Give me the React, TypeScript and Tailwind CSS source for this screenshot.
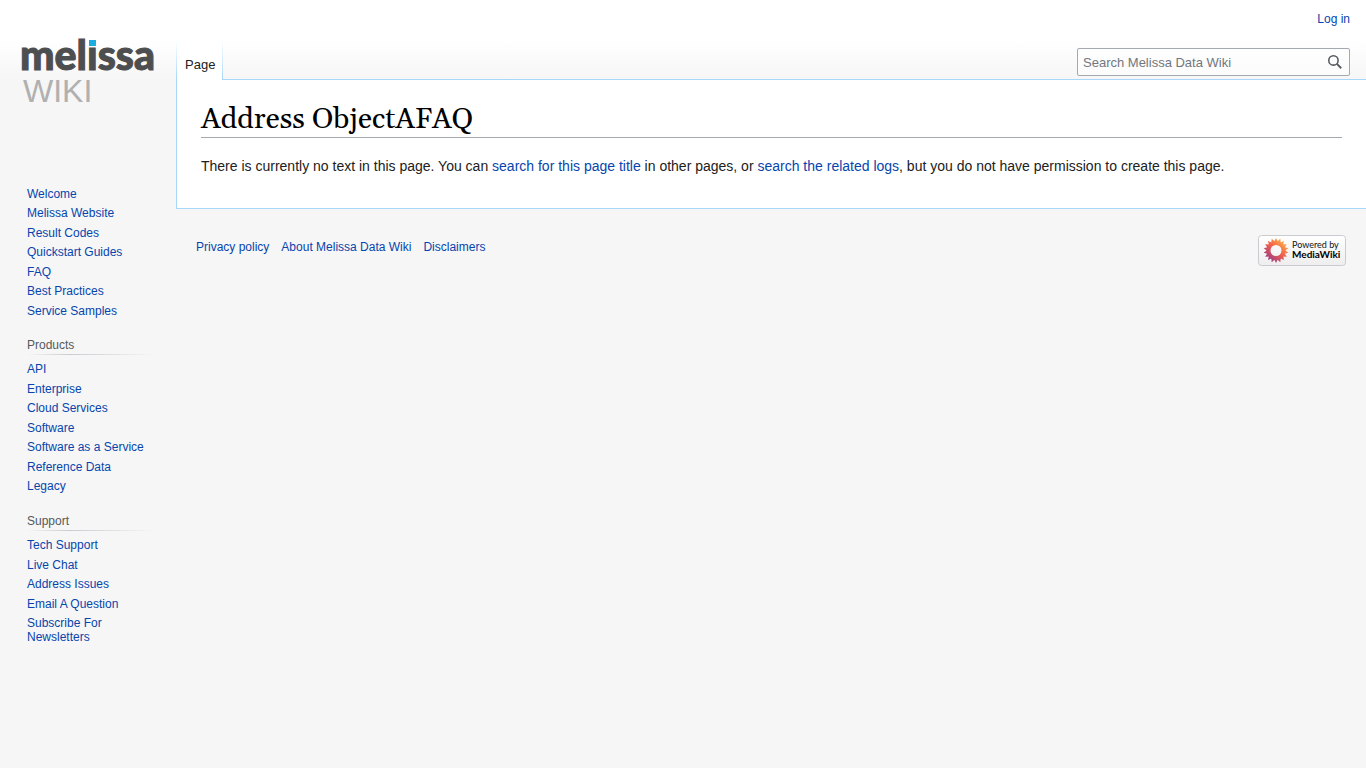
import clsx from "clsx";

const mainLinks = [
  "Welcome",
  "Melissa Website",
  "Result Codes",
  "Quickstart Guides",
  "FAQ",
  "Best Practices",
  "Service Samples",
];

const portals = [
  {
    title: "Products",
    links: [
      "API",
      "Enterprise",
      "Cloud Services",
      "Software",
      "Software as a Service",
      "Reference Data",
      "Legacy",
    ],
  },
  {
    title: "Support",
    links: [
      "Tech Support",
      "Live Chat",
      "Address Issues",
      "Email A Question",
      "Subscribe For Newsletters",
    ],
  },
];

const footerLinks = ["Privacy policy", "About Melissa Data Wiki", "Disclaimers"];

const petals = Array.from({ length: 18 }, (_, i) => i * 20);

function WikiLink({ children }: { children: string }) {
  return (
    <a href="#" className="text-[#0645ad] hover:underline">
      {children}
    </a>
  );
}

function Logo() {
  return (
    <a href="#" aria-label="Melissa Wiki" className="block pl-5 pt-6">
      <svg width="144" height="88" viewBox="0 0 144 88">
        {/* dotless i, the blue square is its dot */}
        <text
          x="0"
          y="46"
          fontFamily="Lato, sans-serif"
          fontWeight="900"
          fontSize="41"
          fill="#4d4e50"
          stroke="#4d4e50"
          strokeWidth="1"
        >
          melıssa
        </text>
        <rect x="69" y="16" width="7" height="6" fill="#1cade0" />
        <text
          x="3"
          y="78"
          fontFamily="Liberation Sans, sans-serif"
          fontSize="32"
          fill="#b0b0b0"
        >
          WIKI
        </text>
      </svg>
    </a>
  );
}

function LinkList({ links, className }: { links: string[]; className: string }) {
  return (
    <ul className={clsx("text-xs leading-[14px]", className)}>
      {links.map((link) => (
        <li key={link}>
          <WikiLink>{link}</WikiLink>
        </li>
      ))}
    </ul>
  );
}

function Sidebar() {
  return (
    <aside className="w-44 shrink-0">
      <div className="h-[187px]">
        <Logo />
      </div>
      <nav className="pl-[27px] pr-5">
        <LinkList
          links={mainLinks}
          className="[&>li:nth-child(odd)]:pb-[5px] [&>li:nth-child(even)]:pb-[6px]"
        />
        {portals.map((portal) => (
          <section key={portal.title} className="pt-[15px]">
            <h3 className="h-4 text-xs leading-[14px] text-[#54595d]">
              {portal.title}
            </h3>
            <div className="mb-[7px] h-px bg-linear-to-r from-transparent via-[#c8ccd1] via-33% to-transparent" />
            <LinkList
              links={portal.links}
              className="[&>li:nth-child(odd)]:pb-[6px] [&>li:nth-child(even)]:pb-[5px]"
            />
          </section>
        ))}
      </nav>
    </aside>
  );
}

function Header() {
  return (
    <header>
      <div className="flex h-10 justify-end pr-4 pt-3 text-xs leading-[14px]">
        <WikiLink>Log in</WikiLink>
      </div>
      <div className="flex h-10 items-stretch">
        <div className="w-px bg-linear-to-b from-white to-[#a7d7f9]" />
        <a
          href="#"
          className="bg-white pl-2 pr-[7px] pt-[17px] text-[13px] leading-4 text-[#202122]"
        >
          Page
        </a>
        <div className="w-px bg-linear-to-b from-white to-[#a7d7f9]" />
        <div className="flex flex-1 justify-end border-b border-[#a7d7f9] pr-4 pt-2">
          <form
            role="search"
            className="flex h-7 w-[273px] items-center rounded-xs border border-[#a2a9b1] bg-white/50"
          >
            <input
              type="search"
              aria-label="Search Melissa Data Wiki"
              placeholder="Search Melissa Data Wiki"
              className="h-full min-w-0 flex-1 bg-transparent pl-[5px] pt-px text-[13px] text-black outline-none placeholder:text-[#72777d]"
            />
            <button type="submit" aria-label="Go" className="px-[7px]">
              <svg width="14" height="14" viewBox="0 0 18 18">
                <path
                  d="M11.5 11.5 L17 17"
                  stroke="#54595d"
                  strokeWidth="2.4"
                />
                <circle
                  cx="7"
                  cy="7"
                  r="6"
                  fill="none"
                  stroke="#54595d"
                  strokeWidth="2"
                />
              </svg>
            </button>
          </form>
        </div>
      </div>
    </header>
  );
}

function PoweredBy() {
  return (
    <a href="#" aria-label="Powered by MediaWiki">
      <svg width="88" height="31" viewBox="0 0 88 31">
        <defs>
          <linearGradient id="badge" x1="0" y1="0" x2="0" y2="1">
            <stop offset="0" stopColor="#ffffff" />
            <stop offset="1" stopColor="#eeeeee" />
          </linearGradient>
          <linearGradient
            id="flower"
            gradientUnits="userSpaceOnUse"
            x1="26"
            y1="6"
            x2="10"
            y2="25"
          >
            <stop offset="0" stopColor="#fcb045" />
            <stop offset="0.45" stopColor="#f4634a" />
            <stop offset="1" stopColor="#983a86" />
          </linearGradient>
          <mask id="petals">
            {petals.map((angle) => (
              <path
                key={angle}
                d="M15.5 8 L18 3 L20.5 8 Z"
                fill="white"
                transform={`rotate(${angle} 18 15.5)`}
              />
            ))}
            <circle cx="18" cy="15.5" r="9.5" fill="white" />
            <circle cx="18" cy="15.5" r="5.5" fill="black" />
          </mask>
        </defs>
        <rect
          x="0.5"
          y="0.5"
          width="87"
          height="30"
          rx="3"
          fill="url(#badge)"
          stroke="#c8ccd1"
        />
        <rect x="4" y="2" width="28" height="27" fill="url(#flower)" mask="url(#petals)" />
        <text x="34" y="13" fontFamily="Lato, sans-serif" fontSize="9" fill="#111111">
          Powered by
        </text>
        <text
          x="34"
          y="23"
          fontFamily="Lato, sans-serif"
          fontWeight="700"
          fontSize="10"
          fill="#000000"
        >
          MediaWiki
        </text>
      </svg>
    </a>
  );
}

export default function App() {
  return (
    <div className="flex min-h-screen bg-[#f6f6f6] bg-[linear-gradient(to_bottom,#ffffff_50%,#f6f6f6_100%)] bg-[length:100%_80px] bg-no-repeat font-['Liberation_Sans',Arial,sans-serif]">
      <Sidebar />
      <div className="min-w-0 flex-1">
        <Header />
        <main className="border-b border-l border-[#a7d7f9] bg-white px-6 pb-[31px] pt-5 text-[#202122]">
          <h1 className="h-[38px] border-b border-[#a2a9b1] font-[Georgia,Gelasio,'Liberation_Serif',serif] text-[29px] leading-10 text-black">
            Address ObjectAFAQ
          </h1>
          <p className="pt-[17px] text-sm leading-[22px]">
            There is currently no text in this page. You can{" "}
            <WikiLink>search for this page title</WikiLink> in other pages, or{" "}
            <WikiLink>search the related logs</WikiLink>, but you do not have
            permission to create this page.
          </p>
        </main>
        <footer className="flex items-start justify-between px-5 pt-[26px]">
          <ul className="flex gap-3 pt-[3px] text-xs leading-[18px]">
            {footerLinks.map((link) => (
              <li key={link}>
                <WikiLink>{link}</WikiLink>
              </li>
            ))}
          </ul>
          <PoweredBy />
        </footer>
      </div>
    </div>
  );
}
